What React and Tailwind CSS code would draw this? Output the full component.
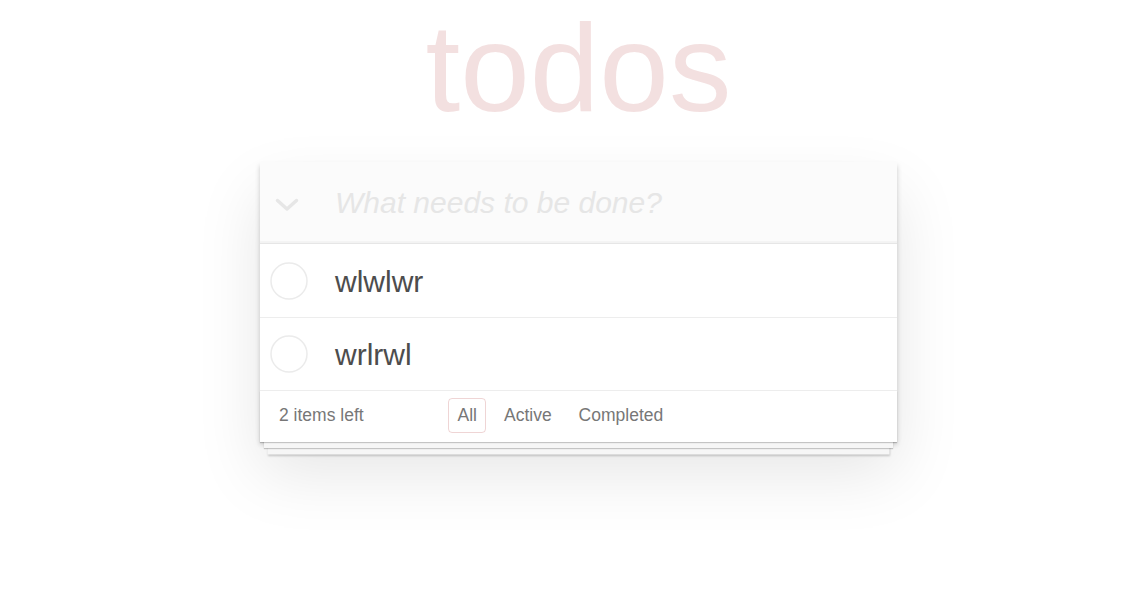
const todos = [
  { id: 1, title: "wlwlwr", rowClass: "h-[74px]" },
  { id: 2, title: "wrlrwl", rowClass: "h-[73px]" },
];

function ToggleAll() {
  return (
    <div className="flex h-full w-[75px] items-center pl-[15px] pt-[5px]">
      <svg width="24" height="14" viewBox="0 0 24 14" fill="none">
        <polyline points="2.5,2.5 12,11 21.5,2.5" stroke="#e6e6e6" strokeWidth="3.5" strokeLinecap="round" strokeLinejoin="round" />
      </svg>
    </div>
  );
}

function TodoItem({ todo }) {
  return (
    <li className={`flex items-center border-b border-[#ededed] ${todo.rowClass}`}>
      <svg width="38" height="38" viewBox="0 0 38 38" className="ml-[10px] shrink-0">
        <circle cx="19" cy="19" r="18" fill="none" stroke="#ebebeb" strokeWidth="1.5" />
      </svg>
      <label className="ml-[27px] pt-[2px] text-[30px] leading-[36px] text-[#4d4d4d]">{todo.title}</label>
    </li>
  );
}

export default function App() {
  return (
    <div className="flex min-h-[598px] justify-center bg-white pl-[35px] pt-[5px] font-['Liberation_Sans',Arial,sans-serif]">
      <div className="w-[637px]">
        <h1 className="text-center text-[125px] font-thin leading-none text-[rgba(175,47,47,0.15)]">todos</h1>

        <section className="mt-[32px] bg-white shadow-[0_2.5px_5px_0_rgba(0,0,0,0.2),0_31px_62px_0_rgba(0,0,0,0.1)]">
          <header className="flex h-[81px] items-center bg-[#fbfbfb] shadow-[inset_0_-2px_1px_rgba(0,0,0,0.03)]">
            <ToggleAll />
            <input
              className="h-full flex-1 bg-transparent pr-[20px] text-[30px] text-[#4d4d4d] outline-none placeholder:italic placeholder:text-[#e6e6e6]"
              placeholder="What needs to be done?"
            />
          </header>

          <ul className="border-t border-[#e6e6e6]">
            {todos.map((t) => (
              <TodoItem key={t.id} todo={t} />
            ))}
          </ul>

          <footer className="flex h-[51px] items-center pb-[2px] pl-[19px] text-[17.5px] text-[#777] shadow-[0_1px_1px_rgba(0,0,0,0.2),0_10px_0_-4px_#f6f6f6,0_11px_1px_-4px_rgba(0,0,0,0.2),0_20px_0_-7.5px_#f6f6f6,0_21px_2px_-7.5px_rgba(0,0,0,0.2)]">
            <span className="w-[169px]">2 items left</span>
            <ul className="flex gap-[8px]">
              <li>
                <a className="block rounded-[4px] border border-[rgba(175,47,47,0.2)] px-[8.5px] py-[4px] leading-[25px]">All</a>
              </li>
              <li>
                <a className="block rounded-[4px] border border-transparent px-[8.5px] py-[4px] leading-[25px]">Active</a>
              </li>
              <li>
                <a className="block rounded-[4px] border border-transparent px-[8.5px] py-[4px] leading-[25px]">Completed</a>
              </li>
            </ul>
          </footer>
        </section>
      </div>
    </div>
  );
}
